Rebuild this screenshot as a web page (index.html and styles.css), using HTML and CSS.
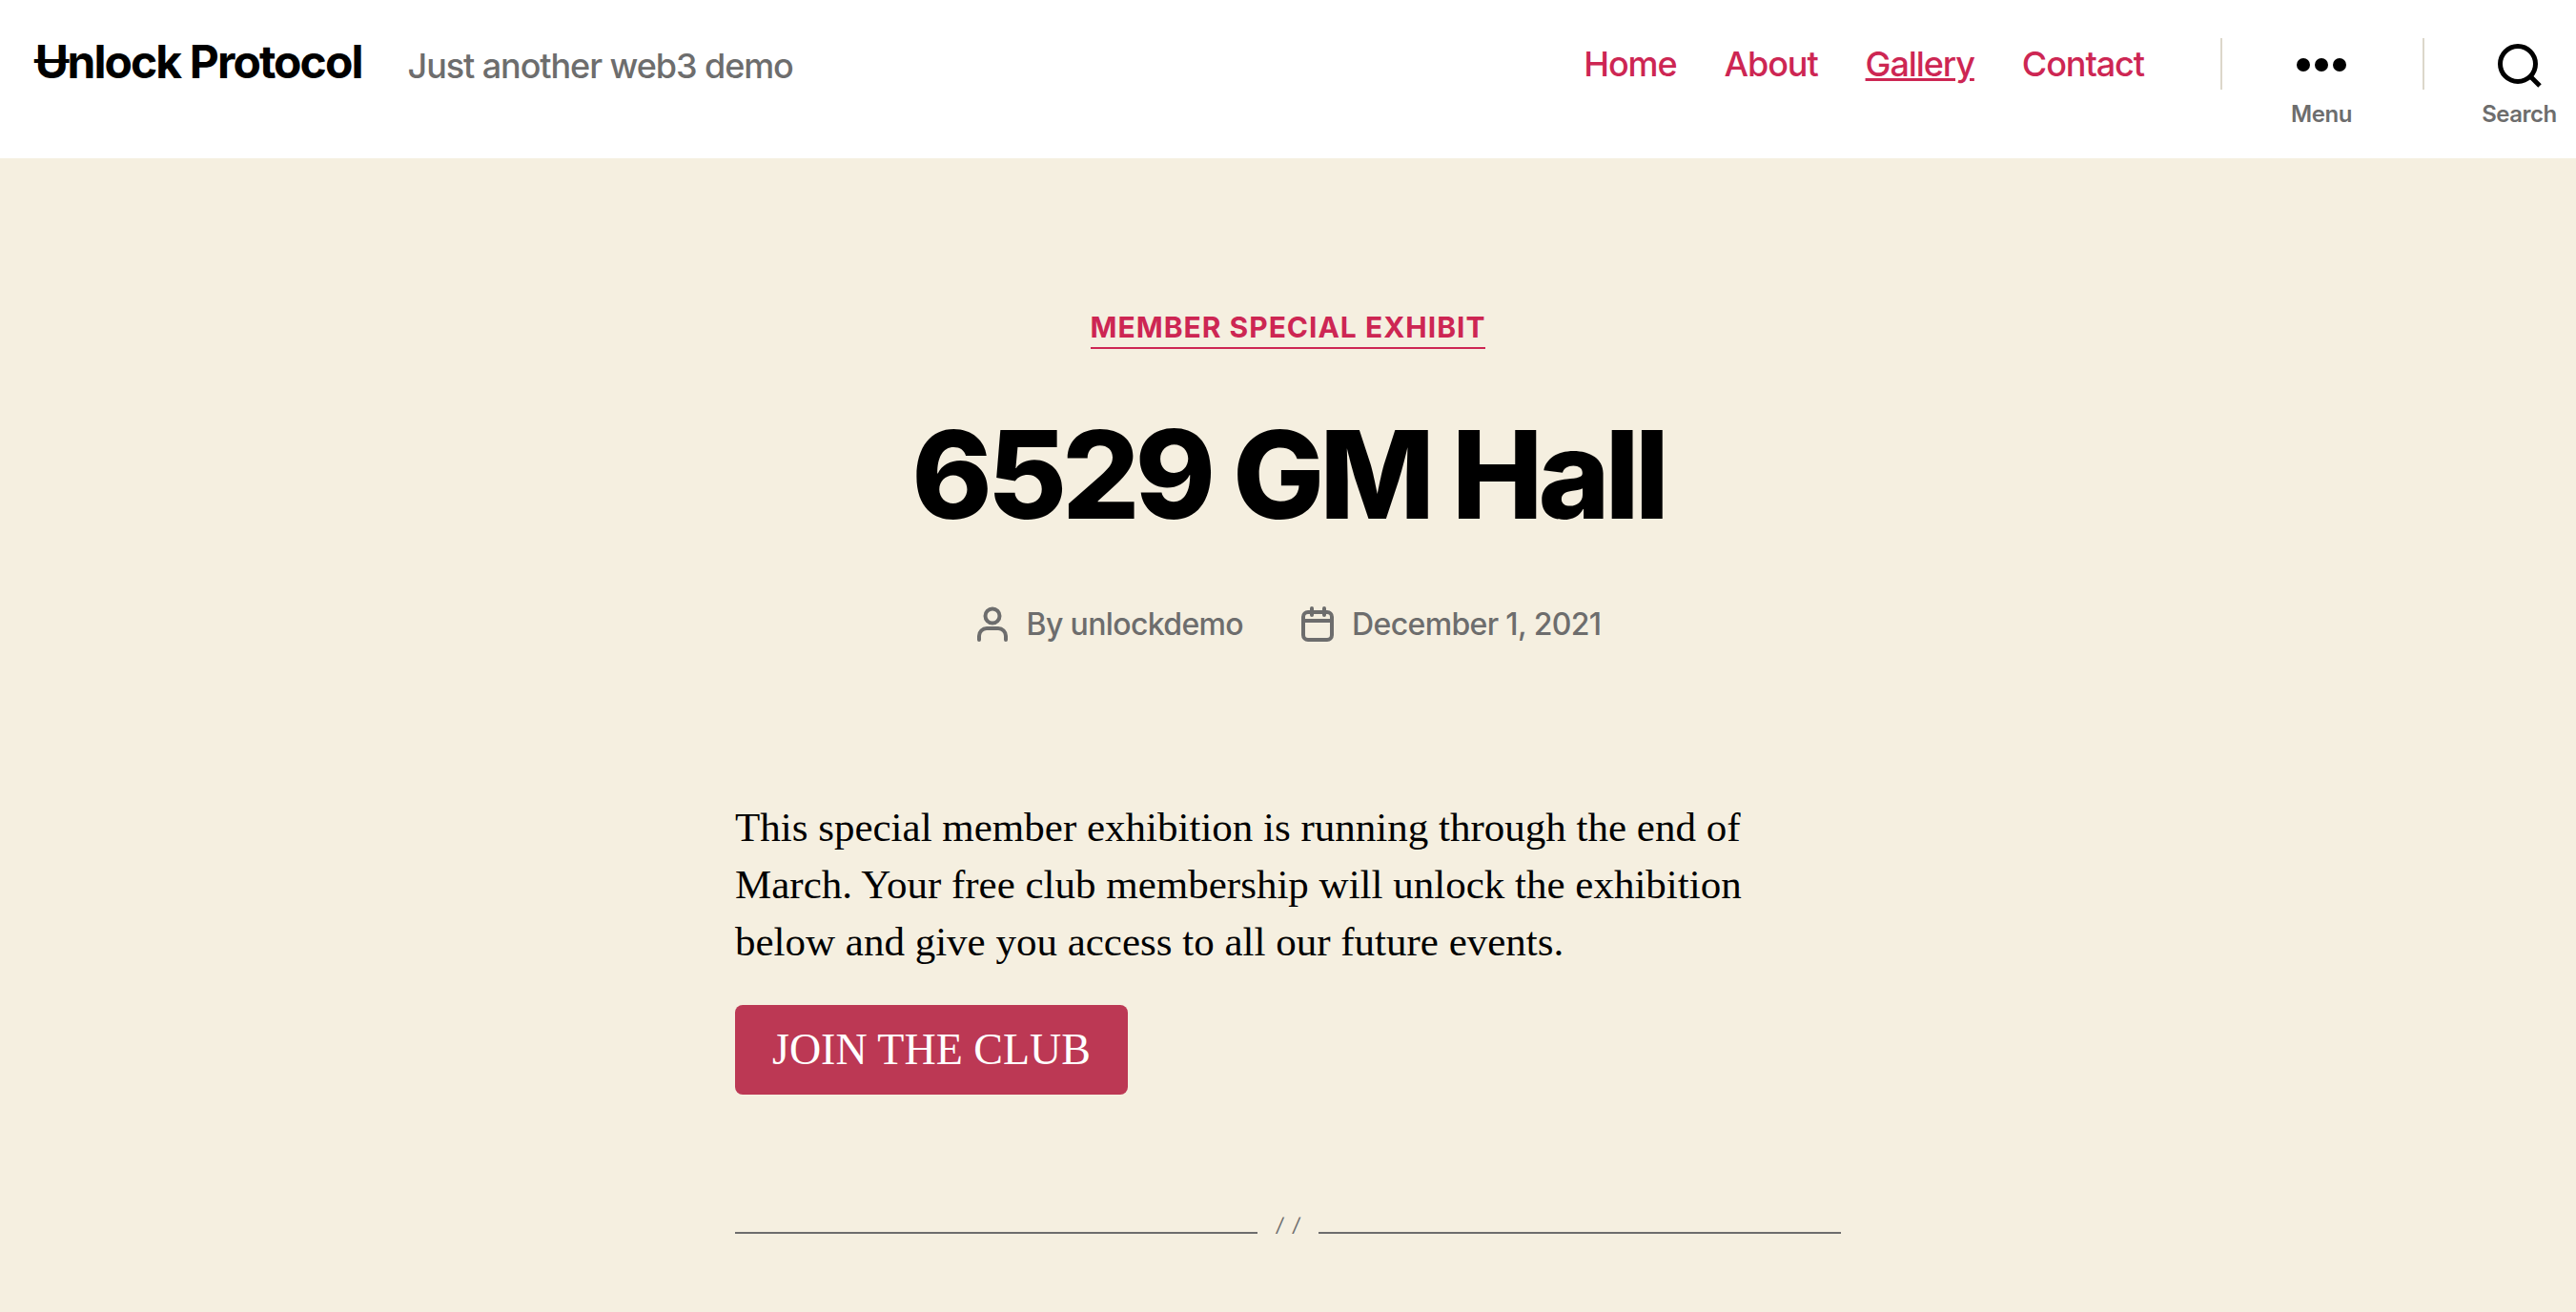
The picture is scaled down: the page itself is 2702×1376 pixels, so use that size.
FILE: index.html
```html
<!DOCTYPE html>
<html lang="en">
<head>
<meta charset="utf-8">
<meta name="viewport" content="width=device-width, initial-scale=1">
<title>6529 GM Hall – Ʉnlock Protocol</title>
<link rel="stylesheet" href="styles.css">
</head>
<body>
<header class="site-header">
  <div class="branding">
    <a class="site-title" href="#">Ʉnlock Protocol</a>
    <span class="tagline">Just another web3 demo</span>
  </div>
  <div class="header-nav">
    <nav class="main-nav" aria-label="Main">
      <a href="#">Home</a>
      <a href="#">About</a>
      <a class="current" href="#">Gallery</a>
      <a href="#">Contact</a>
    </nav>
    <button class="toggle" type="button">
      <svg class="toggle-icon" viewBox="0 0 52 54" aria-hidden="true"><circle cx="7" cy="28" r="7"/><circle cx="26" cy="28" r="7"/><circle cx="45" cy="28" r="7"/></svg>
      <span>Menu</span>
    </button>
    <button class="toggle toggle-search" type="button">
      <svg class="toggle-icon" viewBox="0 0 52 54" stroke="#000" stroke-width="5" aria-hidden="true"><circle cx="24" cy="27" r="18.500"/><path d="M37 40l10 10"/></svg>
      <span>Search</span>
    </button>
  </div>
</header>
<main>
  <header class="entry-header">
    <a class="category" href="#">Member special exhibit</a>
    <h1>6529 GM Hall</h1>
    <ul class="meta">
      <li>
        <svg class="meta-icon" viewBox="0 0 36 40" aria-hidden="true"><circle cx="18" cy="11" r="7.500"/><path d="M4 36v-4a8 8 0 0 1 8-8h12a8 8 0 0 1 8 8v4"/></svg>
        <span>By <a href="#">unlockdemo</a></span>
      </li>
      <li>
        <svg class="meta-icon" viewBox="0 0 36 40" aria-hidden="true"><rect x="3" y="7" width="30" height="29" rx="5"/><path d="M3 16h30M12 3v7M25 3v7"/></svg>
        <a href="#">December 1, 2021</a>
      </li>
    </ul>
  </header>
  <div class="entry-content">
    <p>This special member exhibition is running through the end of March. Your free club membership will unlock the exhibition below and give you access to all our future events.</p>
    <button class="join" type="button">JOIN THE CLUB</button>
    <div class="divider" role="separator"><span>/</span><span>/</span></div>
  </div>
</main>
</body>
</html>
```
FILE: styles.css
```css
* {
  box-sizing: border-box;
}

body {
  margin: 0;
  background: #f5efe0;
  color: #000;
  font-family: Inter, sans-serif;
}

a {
  color: inherit;
  text-decoration: none;
}

button {
  border: 0;
  cursor: pointer;
}

.site-header {
  display: flex;
  justify-content: space-between;
  padding: 40px 20px 34px 36px;
  background: #fff;
}

.branding {
  display: flex;
  align-items: baseline;
  gap: 48px;
}

.site-title {
  font-size: 48px;
  line-height: 50px;
  font-weight: 700;
  letter-spacing: -0.04em;
}

.tagline {
  color: #6d6d6d;
  font-size: 36px;
  font-weight: 500;
  letter-spacing: -0.03em;
}

.header-nav {
  display: flex;
  align-items: flex-start;
}

.main-nav {
  display: flex;
  gap: 50px;
  margin-right: 80px;
  color: #cd2653;
  font-size: 36px;
  line-height: 54px;
  font-weight: 500;
  letter-spacing: -0.03em;
}

.current {
  text-decoration: underline;
}

.toggle {
  display: flex;
  flex-direction: column;
  align-items: center;
  gap: 14px;
  width: 212px;
  padding: 0;
  background: linear-gradient(#dcd7ca, #dcd7ca) left top / 2px 54px no-repeat;
  color: #6d6d6d;
  font-family: inherit;
  font-size: 24px;
  line-height: 24px;
  font-weight: 600;
  letter-spacing: -0.02em;
}

.toggle-search {
  width: 141px;
  padding-left: 62px;
}

.toggle-icon {
  width: 52px;
  height: 54px;
  fill: #000;
}

.toggle-search .toggle-icon {
  fill: none;
}

.entry-header {
  display: flex;
  flex-direction: column;
  align-items: center;
  padding: 160px 40px 0;
}

.category {
  padding-bottom: 4px;
  border-bottom: 2px solid #cd2653;
  color: #cd2653;
  font-size: 30px;
  line-height: 34px;
  font-weight: 700;
  letter-spacing: 1px;
  text-transform: uppercase;
}

h1 {
  margin: 60px 0;
  font-size: 128px;
  line-height: 144px;
  font-weight: 800;
  letter-spacing: -0.04em;
}

.meta {
  display: flex;
  gap: 60px;
  margin: 0;
  padding: 0;
  list-style: none;
  color: #6d6d6d;
  font-size: 32px;
  line-height: 50px;
  font-weight: 500;
  letter-spacing: -0.02em;
}

.meta li {
  display: flex;
  align-items: center;
  gap: 18px;
}

.meta-icon {
  width: 36px;
  height: 40px;
  fill: none;
  stroke: #6d6d6d;
  stroke-width: 4;
  stroke-linecap: round;
}

.entry-content {
  max-width: 1160px;
  margin: 0 auto;
  padding: 158px 0 72px;
  font-family: "Liberation Serif", serif;
}

.entry-content p {
  margin: 0 0 36px;
  font-size: 43px;
  line-height: 60px;
}

.join {
  padding: 22px 39px;
  border-radius: 8px;
  background: #bc3854;
  color: #fff;
  font-family: inherit;
  font-size: 46px;
  line-height: 50px;
}

.divider {
  display: flex;
  align-items: flex-end;
  gap: 10px;
  margin-top: 128px;
  color: #6d6d6d;
  font-family: Inter, sans-serif;
  font-size: 20px;
  font-style: italic;
  line-height: 18px;
}

.divider::before,
.divider::after {
  flex: 1;
  border-bottom: 2px solid #6d6d6d;
  content: "";
}

.divider::before {
  margin-right: 10px;
}

.divider::after {
  margin-left: 10px;
}
```
